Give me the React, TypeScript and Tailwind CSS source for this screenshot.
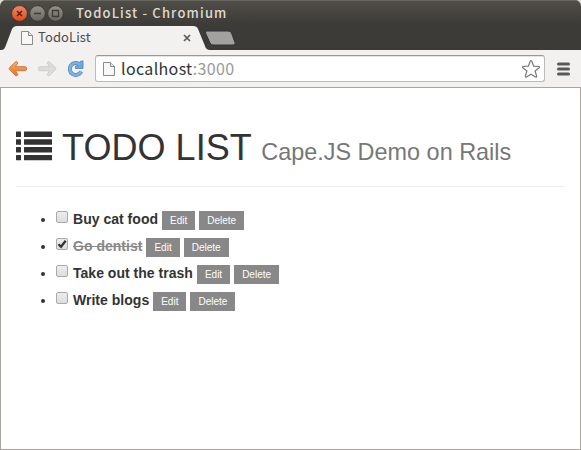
import React from "react";

type Todo = { title: string; done: boolean };

const todos: Todo[] = [
  { title: "Buy cat food", done: false },
  { title: "Go dentist", done: true },
  { title: "Take out the trash", done: false },
  { title: "Write blogs", done: false },
];

const uiFont = "font-['Noto_Sans_CJK_JP',sans-serif]";

function PageIcon({ className }: { className: string }) {
  return (
    <svg className={className} width="12" height="15" viewBox="0 0 12 15">
      <path d="M.5 1.500H7.500L11.500 5.500V14.500H.5Z" fill="#f8f8f8" stroke="#8b8b8b" />
      <path d="M7.500 1.500V5.500H11.500" fill="#e4e4e4" stroke="#8b8b8b" />
    </svg>
  );
}

function WindowControls() {
  return (
    <svg className="ml-[11px] shrink-0" width="54" height="18" viewBox="0 0 54 18">
      <defs>
        <linearGradient id="close" x2="0" y2="1">
          <stop stopColor="#f38764" />
          <stop offset="1" stopColor="#df4b1d" />
        </linearGradient>
        <linearGradient id="control" x2="0" y2="1">
          <stop stopColor="#969289" />
          <stop offset="1" stopColor="#67655f" />
        </linearGradient>
      </defs>
      <circle cx="8.5" cy="9.5" r="7.9" fill="url(#close)" stroke="#33322d" strokeWidth=".8" />
      <path d="M6 7l5 5M11 7l-5 5" stroke="#542413" strokeWidth="1.5" />
      <circle cx="26.5" cy="9.5" r="7.8" fill="url(#control)" stroke="#33322d" strokeWidth=".8" />
      <path d="M23 9.5h7" stroke="#3c3b37" strokeWidth="1.3" />
      <circle cx="44.5" cy="9.5" r="7.8" fill="url(#control)" stroke="#33322d" strokeWidth=".8" />
      <path d="M41.5 6.5h6v6h-6z" fill="none" stroke="#3c3b37" strokeWidth="1.3" />
    </svg>
  );
}

function TabStrip() {
  return (
    <div className="relative h-[25px]">
      <svg className="absolute left-0 top-0" width="240" height="25" viewBox="0 0 240 25">
        <path d="M1 25C4 25 5 23 6 20L12 4Q13.5 1 17 1H193Q197 1 198 4L205 21Q206 25 210 25Z" fill="#f2f1f0" />
        <path d="M207 6H228Q230.500 6 231.500 8L235 17.500Q236 20 233 20H213Q211 20 210 18L205.500 8Q204.500 6 207 6Z" fill="#a3a19f" stroke="#34332f" />
      </svg>
      <div className="relative flex h-full items-center">
        <PageIcon className="ml-[21px]" />
        <span className={`ml-[5px] w-[140px] text-[13px] leading-[24px] tracking-[0.1px] text-[#4c4c4c] ${uiFont} -mt-px`}>TodoList</span>
        <svg className="ml-[5px]" width="8" height="8" viewBox="0 0 8 8">
          <path d="M1 1l6 6M7 1L1 7" stroke="#5b5b5b" strokeWidth="1.7" />
        </svg>
      </div>
    </div>
  );
}

function Toolbar() {
  return (
    <div className="flex h-[38px] items-center border-b border-[#a6a5a3] bg-[#f2f1f0]">
      <svg className="ml-2" width="20" height="18" viewBox="0 0 20 18">
        <defs>
          <linearGradient id="arrow" x2="0" y2="1">
            <stop stopColor="#f7b16b" />
            <stop offset="1" stopColor="#e27424" />
          </linearGradient>
        </defs>
        <path d="M7.500 1.800L1.500 7.800q-.8.9 0 1.800l6 6q1.800.7 2.300-1L7.500 10.700H17.500q1.200-.3 1.200-2t-1.200-2H7.500l2.300-3.900q-.5-1.700-2.300-1Z" fill="url(#arrow)" stroke="#cf7135" strokeWidth=".9" />
      </svg>
      <svg className="ml-[9px]" width="20" height="18" viewBox="0 0 20 18">
        <path d="M12.500 1.800L18.500 7.800q.8.9 0 1.800l-6 6q-1.800.7-2.300-1L12.500 10.700H2.500q-1.200-.3-1.200-2t1.200-2H12.500l-2.300-3.900q.5-1.700 2.300-1Z" fill="#dddcda" stroke="#cccac7" strokeWidth=".9" />
      </svg>
      <svg className="ml-[10px]" width="18" height="18" viewBox="0 0 18 18">
        <path d="M14.200 11.500A6 6 0 1 1 12.800 4.500" fill="none" stroke="#4f87bd" strokeWidth="4" />
        <path d="M16 .8v7.700H8.500V6l2.500-.5 2.500-4.200Z" fill="#6ca6dc" stroke="#4f87bd" strokeWidth=".8" />
        <path d="M14.200 11.500A6 6 0 1 1 12.800 4.500" fill="none" stroke="#7db2e2" strokeWidth="2.600" />
      </svg>
      <div className="ml-[10px] flex h-[27px] w-[450px] items-center rounded-[3px] border border-[#bcbbb9] border-t-[#999896] bg-white shadow-[inset_0_1px_0_#e5e5e5]">
        <PageIcon className="ml-[7px]" />
        <span className={`ml-[6px] text-[16px] leading-[24px] tracking-[0.35px] text-[#333] ${uiFont} -mt-[2px]`}>
          localhost<span className="text-[#999]">:3000</span>
        </span>
        <svg className="ml-auto mr-[3px]" width="20" height="20" viewBox="0 0 20 20">
          <path d="M9.200 2.200Q10 .8 10.800 2.200L12.700 7.200L17.800 7.500Q19 7.800 18.200 8.700L14.100 12L15.600 17.200Q15.700 18.500 14.500 18L10 15.200L5.500 18Q4.300 18.500 4.400 17.200L5.900 12L1.800 8.700Q1 7.800 2.200 7.500L7.300 7.200Z" fill="white" stroke="#777" strokeWidth="1.200" strokeLinejoin="round" />
        </svg>
      </div>
      <svg className="ml-3" width="13" height="14" viewBox="0 0 13 14">
        <path d="M1.500 2h10M1.500 7h10M1.500 12h10" stroke="#595959" strokeWidth="3" strokeLinecap="round" />
      </svg>
    </div>
  );
}

function ListIcon() {
  return (
    <svg className="mt-[11px] shrink-0" width="36" height="30" viewBox="0 0 36 30">
      <g fill="#333">
        <rect y=".6" width="5" height="5.400" rx=".5" />
        <rect x="8" y=".6" width="28" height="5.400" rx=".5" />
        <rect y="8.300" width="5" height="5.400" rx=".5" />
        <rect x="8" y="8.300" width="28" height="5.400" rx=".5" />
        <rect y="16.100" width="5" height="5.400" rx=".5" />
        <rect x="8" y="16.100" width="28" height="5.400" rx=".5" />
        <rect y="23.900" width="5" height="5.400" rx=".5" />
        <rect x="8" y="23.900" width="28" height="5.400" rx=".5" />
      </g>
    </svg>
  );
}

function Checkbox({ checked }: { checked: boolean }) {
  return (
    <svg className="mt-[2px] shrink-0" width="12" height="13" viewBox="0 0 12 13">
      <defs>
        <linearGradient id="box" x2="0" y2="1">
          <stop stopColor="#ededed" />
          <stop offset="1" stopColor="#dcdcdc" />
        </linearGradient>
      </defs>
      <rect x=".5" y=".5" width="11" height="11" rx="1.500" fill="url(#box)" stroke="#aaa" />
      {checked && <path d="M2.500 6.200L5 8.800L9.700 2.800" fill="none" stroke="#333" strokeWidth="2.300" />}
    </svg>
  );
}

function Action({ children }: { children: React.ReactNode }) {
  return (
    <button className="ml-1 mt-[2px] h-[19px] shrink-0 bg-[#888] px-2 text-[10px] leading-[19px] tracking-[0px] text-white">{children}</button>
  );
}

export default function App() {
  return (
    <div className="h-[450px] w-[581px] overflow-hidden bg-[#dfdbd7] font-['Liberation_Sans',Arial,sans-serif]">
      <div className="flex h-full flex-col overflow-hidden rounded-t-[6px] bg-white">
        <header className="bg-linear-to-b from-[#504e48] to-[#3c3b37] to-50% shadow-[inset_0_1px_0_#68665f]">
          <div className="flex h-[25px] items-center">
            <WindowControls />
            <h2 className={`ml-[11px] whitespace-nowrap text-[13px] font-medium leading-[24px] tracking-[1.15px] text-[#dfdbd2] ${uiFont}`}>TodoList - Chromium</h2>
          </div>
          <TabStrip />
        </header>
        <Toolbar />
        <main className="flex-1 border-x border-b border-[#aaa6a1] px-[15px] text-[#333]">
          <h1 className="mt-[32px] flex h-[67px] items-start whitespace-nowrap border-b border-[#eee] text-[36px] leading-[40px]">
            <ListIcon />
            <span className="ml-[10px] mt-[8px] tracking-[0.05px]">
              TODO LIST <small className="text-[23.4px] tracking-[0.02px] text-[#777]">Cape.JS Demo on Rails</small>
            </span>
          </h1>
          <ul className="ml-[25px] mt-[22px]">
            {todos.map((todo) => (
              <li key={todo.title} className="flex h-[27px] items-start text-[14px] leading-[20px] tracking-[0.02px]">
                <span className="mr-[11px] mt-[9px] size-1 rounded-full bg-[#333]" />
                <Checkbox checked={todo.done} />
                <span className={todo.done ? "ml-[5px] font-bold text-[#888] line-through" : "ml-[5px] font-bold"}>{todo.title}</span>
                <Action>Edit</Action>
                <Action>Delete</Action>
              </li>
            ))}
          </ul>
        </main>
      </div>
    </div>
  );
}
